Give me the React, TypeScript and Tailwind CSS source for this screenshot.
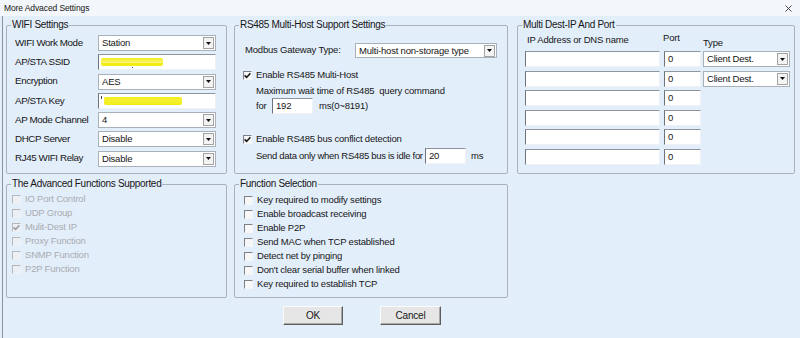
import React from "react";

function Select({ value, className = "" }: { value: string; className?: string }) {
  return (
    <div
      className={
        "flex items-center h-[16px] bg-white border border-[#a9b0b8] pl-[3px] " + className
      }
    >
      <span className="flex-1 truncate leading-[14px]">{value}</span>
      <span className="w-[11px] h-[12px] mr-[1px] border border-[#a3a3a3] bg-[#f3f3f3] flex items-center justify-center">
        <svg width="5" height="3" viewBox="0 0 5 3">
          <path d="M0 0H5L2.5 3Z" fill="#111" />
        </svg>
      </span>
    </div>
  );
}

function Input({
  value = "",
  className = "",
  children,
}: {
  value?: string;
  className?: string;
  children?: React.ReactNode;
}) {
  return (
    <div
      className={
        "relative h-[16px] bg-white border border-t-[#8e949b] border-l-[#6f747a] border-b-[#eef1f5] border-r-[#eef1f5] pl-[3px] leading-[14px] " +
        className
      }
    >
      {value}
      {children}
    </div>
  );
}

function Check({
  label,
  checked = false,
  disabled = false,
  className = "",
}: {
  label: string;
  checked?: boolean;
  disabled?: boolean;
  className?: string;
}) {
  return (
    <div className={"flex items-center h-[14px] gap-[4px] " + className}>
      <span
        className={
          disabled
            ? "w-[9px] h-[9px] border border-t-[#b4b8bd] border-l-[#b4b8bd] border-b-[#eef2f7] border-r-[#eef2f7] bg-[#eceff3] flex items-center justify-center"
            : "w-[9px] h-[9px] border border-t-[#7d8187] border-l-[#7d8187] border-b-[#f4f6f9] border-r-[#f4f6f9] bg-[#f7f7f7] flex items-center justify-center"
        }
      >
        {checked && (
          <svg width="7" height="7" viewBox="0 0 7 7">
            <path
              d="M0.6 3.4L2.6 5.4L6.4 1.2"
              fill="none"
              stroke={disabled ? "#9a9a9a" : "#111"}
              strokeWidth="1.5"
            />
          </svg>
        )}
      </span>
      <span className={disabled ? "text-[#a9acb0] leading-[12px] whitespace-nowrap" : "leading-[12px] whitespace-nowrap"}>{label}</span>
    </div>
  );
}

function Group({
  title,
  className = "",
  children,
}: {
  title: string;
  className?: string;
  children?: React.ReactNode;
}) {
  return (
    <fieldset className={"border border-[#a9b1ba] rounded-[2px] p-0 m-0 min-w-0 " + className}>
      <legend className="ml-[4px] px-[1px] leading-[12px] text-[10px] tracking-[-0.3px]">{title}</legend>
      {children}
    </fieldset>
  );
}

export default function App() {
  const wifiRows: { label: string; kind: "select" | "input"; value: string; mark?: "ssid" | "key" }[] = [
    { label: "WIFI Work Mode", kind: "select", value: "Station" },
    { label: "AP/STA SSID", kind: "input", value: "", mark: "ssid" },
    { label: "Encryption", kind: "select", value: "AES" },
    { label: "AP/STA Key", kind: "input", value: "", mark: "key" },
    { label: "AP Mode Channel", kind: "select", value: "4" },
    { label: "DHCP Server", kind: "select", value: "Disable" },
    { label: "RJ45 WIFI Relay", kind: "select", value: "Disable" },
  ];

  const adv = [
    { label: "IO Port Control", checked: false },
    { label: "UDP Group", checked: false },
    { label: "Mulit-Dest IP", checked: true },
    { label: "Proxy Function", checked: false },
    { label: "SNMP Function", checked: false },
    { label: "P2P Function", checked: false },
  ];

  const funcs = [
    "Key required to modify settings",
    "Enable broadcast receiving",
    "Enable P2P",
    "Send MAC when TCP established",
    "Detect net by pinging",
    "Don't clear serial buffer when linked",
    "Key required to establish TCP",
  ];

  const ipRows = [true, true, false, false, false, false];

  return (
    <div className="w-[800px] h-[338px] bg-[#e3eefb] flex flex-col overflow-hidden font-['Liberation_Sans',Arial,sans-serif] text-[9.5px] tracking-[-0.2px] text-[#161616]">
      {/* Title bar */}
      <div className="h-[16px] bg-[#f3f6fa] flex items-center pl-[4px] pr-[8px] shrink-0">
        <span className="text-[8.5px] tracking-[-0.1px] flex-1">More Advaced Settings</span>
        <svg width="7" height="7" viewBox="0 0 7 7">
          <path d="M0.5 0.5L6.5 6.5M6.5 0.5L0.5 6.5" stroke="#333" strokeWidth="0.9" />
        </svg>
      </div>

      {/* Body */}
      <div className="flex-1 ml-[2px] border-l border-[#8e9399] pl-[3px] pt-[3px] flex items-start">
        {/* Column 1 */}
        <div className="w-[221px] flex flex-col">
          <Group title="WIFI Settings" className="h-[155px]">
            <div className="pl-[8px] pt-[4px] flex flex-col gap-[3.3px]">
              {wifiRows.map((r) => (
                <div key={r.label} className="flex items-center h-[16px]">
                  <span className="w-[83px] text-[9.8px] tracking-[-0.4px] whitespace-nowrap">{r.label}</span>
                  {r.kind === "select" ? (
                    <Select value={r.value} className="w-[118px]" />
                  ) : (
                    <Input className="w-[118px]">
                      {r.mark === "ssid" && (
                        <>
                          <span className="absolute left-[2px] top-[3px] w-[62px] h-[8px] rounded-[2px] bg-[linear-gradient(180deg,#f3ee1a_0%,#f7f35a_45%,#fbf9b8_52%,#f3ee1a_62%,#f1ec10_100%)] blur-[0.4px]" />
                          <span className="absolute left-[33px] top-[12px] w-[1px] h-[1px] bg-[#555]" />
                        </>
                      )}
                      {r.mark === "key" && (
                        <>
                          <span className="absolute left-[2px] top-[2px] w-[1px] h-[3px] bg-[#444]" />
                          <span className="absolute left-[5px] top-[3px] w-[78px] h-[8px] rounded-[2px] bg-[linear-gradient(180deg,#f3ee1a_0%,#f5f030_50%,#f1ec10_100%)] blur-[0.4px]" />
                        </>
                      )}
                    </Input>
                  )}
                </div>
              ))}
            </div>
          </Group>
          <Group title="The Advanced Functions Supported" className="h-[120px] mt-[4px]">
            <div className="pl-[5px] pt-[2px] flex flex-col">
              {adv.map((a) => (
                <Check key={a.label} label={a.label} checked={a.checked} disabled />
              ))}
            </div>
          </Group>
        </div>

        {/* Column 2 */}
        <div className="w-[274px] ml-[7px] flex flex-col">
          <Group title="RS485 Multi-Host Support Settings" className="h-[155px]">
            <div className="flex flex-col">
              <div className="flex items-center h-[15px] mt-[12px] ml-[10px]">
                <span className="w-[110px] whitespace-nowrap">Modbus Gateway Type:</span>
                <Select value="Multi-host non-storage type" className="w-[142px] !h-[15px]" />
              </div>
              <Check label="Enable RS485 Multi-Host" checked className="mt-[10px] ml-[8px]" />
              <div className="h-[12px] leading-[12px] mt-[3px] ml-[21px] whitespace-nowrap">
                Maximum wait time of RS485&nbsp; query command
              </div>
              <div className="flex items-center h-[16px] mt-[1px] ml-[21px]">
                <span className="w-[16px]">for</span>
                <Input value="192" className="w-[41px]" />
                <span className="ml-[6px]">ms(0~8191)</span>
              </div>
              <Check label="Enable RS485 bus conflict detection" checked className="mt-[18px] ml-[8px]" />
              <div className="flex items-center h-[16px] mt-[2px] ml-[21px]">
                <span className="w-[169px] shrink-0 whitespace-nowrap tracking-[-0.3px]">Send data only when RS485 bus is idle for</span>
                <Input value="20" className="w-[41px] shrink-0" />
                <span className="ml-[5px]">ms</span>
              </div>
            </div>
          </Group>
          <Group title="Function Selection" className="h-[120px] mt-[4px]">
            <div className="pl-[9px] pt-[3px] flex flex-col">
              {funcs.map((f) => (
                <Check key={f} label={f} />
              ))}
            </div>
          </Group>
          <div className="flex mt-[8px] pl-[49px]">
            <button className="w-[60px] h-[19px] bg-[#e6e6e6] border border-t-[#fbfbfb] border-l-[#fbfbfb] border-b-[#5e5e5e] border-r-[#5e5e5e] shadow-[inset_-1px_-1px_0_#a8a8a8] text-[10px] leading-[16px]">
              OK
            </button>
            <button className="w-[61px] h-[19px] ml-[37px] bg-[#e6e6e6] border border-t-[#fbfbfb] border-l-[#fbfbfb] border-b-[#5e5e5e] border-r-[#5e5e5e] shadow-[inset_-1px_-1px_0_#a8a8a8] text-[10px] leading-[16px]">
              Cancel
            </button>
          </div>
        </div>

        {/* Column 3 */}
        <div className="w-[278px] ml-[9px]">
          <Group title="Multi Dest-IP And Port" className="h-[155px]">
            <div className="pl-[7px]">
              <div className="flex h-[20px]">
                <span className="w-[138px] pl-[2px] pt-[3px] leading-[12px] whitespace-nowrap">IP Address or DNS name</span>
                <span className="w-[40px] pt-[1px] leading-[12px]">Port</span>
                <span className="pt-[6px] leading-[12px]">Type</span>
              </div>
              <div className="flex flex-col gap-[3.5px]">
                {ipRows.map((hasType, i) => (
                  <div key={i} className="flex items-center h-[16px]">
                    <Input className="w-[135px]" />
                    <Input value="0" className="w-[37px] ml-[4px]" />
                    {hasType && <Select value="Client Dest." className="w-[87px] ml-[2px]" />}
                  </div>
                ))}
              </div>
            </div>
          </Group>
        </div>
      </div>
    </div>
  );
}
